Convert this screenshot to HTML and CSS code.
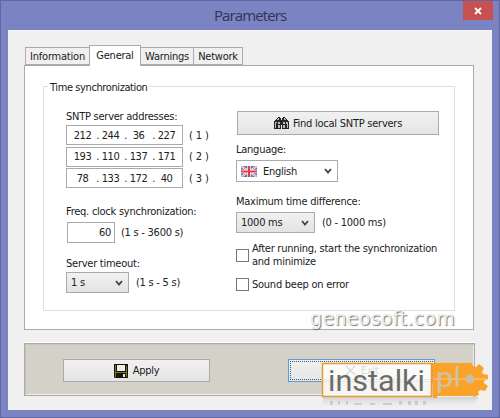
FILE: index.html
```html
<!DOCTYPE html>
<html lang="en">
<head>
<meta charset="utf-8">
<title>Parameters</title>
<link rel="stylesheet" href="styles.css">
</head>
<body>
<div class="window">
  <header class="titlebar">
    <h1>Parameters</h1>
    <button class="close" aria-label="Close"><svg width="8" height="8" viewBox="0 0 8 8"><path d="M1 1l6 6M7 1L1 7" stroke="#fff" stroke-width="1.8"/></svg></button>
  </header>
  <main class="client">
    <nav class="tabs">
      <span class="tab tab-info">Information</span><span class="tab tab-general active">General</span><span class="tab tab-warn">Warnings</span><span class="tab tab-net">Network</span>
    </nav>
    <section class="page">
      <div class="group">
        <div class="legend"><span>Time synchronization</span></div>
        <div class="columns">
          <div class="left">
            <div class="label">SNTP server addresses:</div>
            <div class="row addr"><div class="ip"><span>212</span><i>.</i><span>244</span><i>.</i><span>36</span><i>.</i><span>227</span></div><span class="num">( 1 )</span></div>
            <div class="row addr"><div class="ip"><span>193</span><i>.</i><span>110</span><i>.</i><span>137</span><i>.</i><span>171</span></div><span class="num">( 2 )</span></div>
            <div class="row addr"><div class="ip"><span>78</span><i>.</i><span>133</span><i>.</i><span>172</span><i>.</i><span>40</span></div><span class="num">( 3 )</span></div>
            <div class="label freq">Freq. clock synchronization:</div>
            <div class="row"><div class="number">60</div><span class="range">(1 s - 3600 s)</span></div>
            <div class="label timeout">Server timeout:</div>
            <div class="row"><div class="select seconds"><span>1 s</span><svg class="chev" width="8" height="6" viewBox="0 0 8 6"><path d="M1 1l3 3.5L7 1" fill="none" stroke="#444" stroke-width="1.8"/></svg></div><span class="range-timeout">(1 s - 5 s)</span></div>
          </div>
          <div class="right">
            <div class="button find">
              <svg width="15" height="12" viewBox="0 0 15 12"><path d="M0 4h1V3h1V2h1V1h1V0h2v1h1v2h1V1h1V0h2v1h1v1h1v1h1v1h1v8H8V8H7v4H0z" fill="#252525"/><path d="M4 1h1v2H3V2h1zM10 1h1v1h1v1h-2zM1 5h2v1H2v5H1zM4 5h2v2H4zM4 8h2v3H4zM9 5h2v2H9zM12 5h2v6h-1V7h-1zM9 8h2v3H9z" fill="#bbb"/></svg>
              <span>Find local SNTP servers</span>
            </div>
            <div class="label language">Language:</div>
            <div class="select lang">
              <svg width="16" height="11" viewBox="0 0 16 11"><path fill="#6670b5" d="M0 0h16v11H0z"/><path d="M0 0l16 11M16 0L0 11" stroke="#fff" stroke-width="2"/><path d="M0 0l16 11M16 0L0 11" stroke="#dc6677" stroke-width=".8"/><path d="M8 0v11M0 5.5h16" stroke="#fff" stroke-width="3.4"/><path d="M8 0v11M0 5.5h16" stroke="#e03c48" stroke-width="2"/></svg>
              <span>English</span><svg class="chev" width="8" height="6" viewBox="0 0 8 6"><path d="M1 1l3 3.5L7 1" fill="none" stroke="#444" stroke-width="1.8"/></svg>
            </div>
            <div class="label maxdiff">Maximum time difference:</div>
            <div class="row"><div class="select ms"><span>1000 ms</span><svg class="chev" width="8" height="6" viewBox="0 0 8 6"><path d="M1 1l3 3.5L7 1" fill="none" stroke="#444" stroke-width="1.8"/></svg></div><span class="range-ms">(0 - 1000 ms)</span></div>
            <div class="check first"><span class="box"></span><span>After running, start the synchronization<br>and minimize</span></div>
            <div class="check second"><span class="box"></span><span>Sound beep on error</span></div>
          </div>
        </div>
      </div>
      <div class="site">geneosoft.com</div>
    </section>
    <footer class="actions">
      <div class="button apply">
        <svg width="14" height="14" viewBox="0 0 14 14"><path d="M0 0h14v14H1l-1-1z" fill="#151508"/><path d="M1 1h1v12H1zM12 2h1v11h-1zM2 8h10v1H2z" fill="#77772a"/><path d="M3 1h8v6H3z" fill="#eee"/><path d="M9 10h2v3H9z" fill="#e5e5e5"/></svg>
        <span>Apply</span>
      </div>
      <div class="button exit">
        <svg width="11" height="11" viewBox="0 0 12 12"><path d="M1 1l10 10M11 1L1 11" stroke="#555" stroke-width="1.5"/></svg>
        <span>Exit</span>
      </div>
    </footer>
  </main>
  <div class="badge">
    <svg width="172" height="48" viewBox="0 0 172 48">
      <defs><linearGradient id="shade" x2="0" y2="1"><stop stop-color="#999" stop-opacity=".7"/><stop offset="1" stop-color="#ccc" stop-opacity="0"/></linearGradient></defs>
      <path d="M2 35h156l-7 10H2z" fill="url(#shade)" opacity=".5"/>
      <path d="M111 1h40l1 3 3 1 3-3 5 4-2 4 1 2 5 1v4l-4 2v2l4 3-3 5-5-1-2 2 1 3-5 2-3-2-3 1h-31v2h-4z" fill="#fba329"/>
      <path d="M112 16h54v2h-54z" fill="#ffc678" opacity=".6"/>
      <circle cx="149" cy="17" r="4.6" fill="#cdbca4"/>
      <rect x="1.5" y="1.5" width="109" height="33" fill="#fffffb" fill-opacity=".78" stroke="#e69a38" stroke-width="1.5"/>
      <text class="pl" x="115" y="25" textLength="25" lengthAdjust="spacingAndGlyphs">pl</text>
      <text class="instalki" x="7" y="29" textLength="97" lengthAdjust="spacingAndGlyphs">instalki</text>
      <g fill="#888" opacity=".3"><path d="M9 39h3v4H9zM17 39h2v4h-2zM25 39h2v4h-2zM33 41h8v2h-8zM49 41h5v2h-5zM62 41h9v2h-9zM78 39h3v4h-3zM87 39h3v4h-3zM94 39h3v4h-3zM102 39h3v4h-3z"/></g>
    </svg>
  </div>
</div>
</body>
</html>
```
FILE: styles.css
```css
* { box-sizing: border-box; }
body { margin: 0; font: 11px/13px "DejaVu Sans Condensed", "DejaVu Sans", sans-serif; font-stretch: condensed; letter-spacing: -.25px; color: #202020; }
.window { position: relative; width: 500px; height: 418px; padding: 0 8px 8px; background: #7b83c3; box-shadow: inset 0 0 0 1px #6068a3; }
.titlebar { height: 30px; display: flex; align-items: flex-start; justify-content: flex-end; }
h1 { flex: 1; margin: 5px 0 0 206px; font: 15px/20px "Open Sans", sans-serif; letter-spacing: -.9px; color: #303557; }
.close { width: 30px; height: 19px; margin: 1px -1px 0 0; padding: 0; border: 0; background: #c75050; display: flex; align-items: center; justify-content: center; }
.client { height: 380px; padding: 16px 17px 15px 16px; background: #f0f0f0; border: 1px solid #f7f7f7; border-width: 1px 0 0; }
.tabs { height: 18px; padding-left: 1px; display: flex; align-items: flex-end; }
.tab { height: 18px; border: 1px solid #aaa; border-left-width: 0; background: #f0f0f0; display: flex; align-items: center; justify-content: center; white-space: nowrap; }
.tab-info { width: 65px; border-left-width: 1px; letter-spacing: -.2px; }
.tab-general { width: 51px; }
.tab-warn { width: 53px; }
.tab-net { width: 49px; }
.tab.active { height: 21px; margin-bottom: -1px; padding-bottom: 2px; background: #fff; border-bottom: 0; border-left-width: 1px; margin-left: -1px; width: 52px; z-index: 1; }
.page { width: 450px; height: 265px; border: 1px solid #aaa; background: #fff; padding: 20px 18px 0; }
.group { width: 412px; height: 225px; border: 1px solid #ddd; }
.legend { height: 0; padding-left: 4px; letter-spacing: -.4px; }
.legend span { display: inline-block; background: #fff; padding: 0 2px; transform: translateY(-6px); }
.columns { display: flex; }
.left { width: 170px; margin-left: 22px; padding-top: 23px; }
.right { width: 215px; padding-top: 24px; }
.label { height: 15px; white-space: nowrap; }
.row { display: flex; align-items: center; white-space: nowrap; }
.addr { height: 20px; margin-bottom: 1.5px; }
.ip { width: 117px; height: 20px; border: 1px solid #aaa; display: grid; grid-template-columns: 23px 5px 23px 5px 23px 5px 23px; align-items: center; justify-content: center; text-align: center; letter-spacing: -.5px; }
.ip i { font-style: normal; text-align: right; }
.num { margin-left: 6px; letter-spacing: -.1px; }
.freq { margin-top: 17px; height: 17px; }
.number { width: 48px; height: 21px; margin-left: 1px; padding: 3px 3px 0 0; border: 1px solid #aaa; text-align: right; }
.range { margin-left: 6px; }
.timeout { margin-top: 14px; height: 15px; }
.select { height: 21px; padding: 0 5px 0 4px; display: flex; align-items: center; border: 1px solid #aaa; background: linear-gradient(#f1f1f1, #e3e3e3); }
.chev { margin-left: auto; }
.seconds { width: 63px; }
.range-timeout { margin-left: 7px; }
.button { display: flex; align-items: center; justify-content: center; gap: 4px; border: 1px solid #aaa; background: linear-gradient(#f1f1f1, #e5e5e5); white-space: nowrap; }
.find { width: 202px; height: 24px; margin-left: 1px; }
.language { margin-top: 8px; height: 17px; }
.lang { width: 102px; height: 22px; background: #fff; gap: 6px; }
.maxdiff { margin-top: 13px; height: 17px; }
.ms { width: 79px; }
.range-ms { margin-left: 7px; }
.check { display: flex; align-items: center; gap: 3px; white-space: nowrap; }
.box { width: 13px; height: 13px; border: 1px solid #777; background: #fff; flex: none; }
.first { margin-top: 9px; }
.second { margin-top: 10px; }
.site { height: 20px; width: 412px; margin-top: -3px; text-align: right; font: 19px/20px "DejaVu Sans", sans-serif; letter-spacing: .3px; color: #eee; text-shadow: 1px 1px 1px #777; }
.actions { width: 451px; height: 53px; margin-top: 13px; padding: 15px 0 0 38px; display: flex; gap: 78px; background: #d4d1c9; border: 1px solid #aaa; box-shadow: inset 1px 1px #c8c5be, inset -1px -1px #eee, 0 -1px #fff; }
.apply, .exit { width: 147px; height: 23px; gap: 5px; }
.exit { border: 1px solid #579de5; outline: 1px dotted #555; outline-offset: -3px; color: #555; }
.badge { position: absolute; left: 321px; top: 362px; width: 172px; height: 48px; }
.instalki { font: 30px Roboto, sans-serif; fill: #6b6b6b; letter-spacing: 0; }
.pl { font: 27px Roboto, sans-serif; fill: #d1c0a8; letter-spacing: 0; }
```
